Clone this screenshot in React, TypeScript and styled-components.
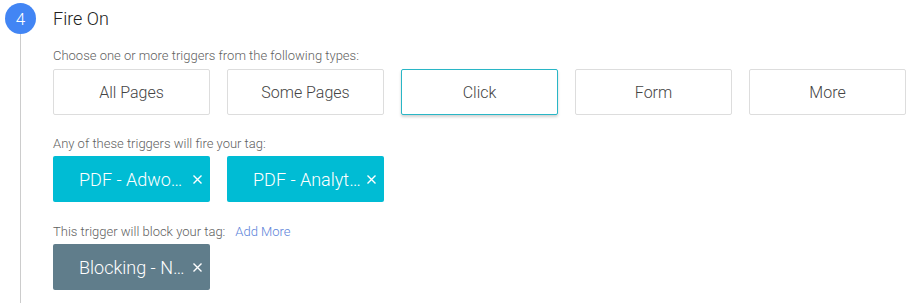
import React from "react";
import styled, { createGlobalStyle } from "styled-components";

const GlobalStyle = createGlobalStyle`
    html, body {
        margin: 0;
        padding: 0;
        background: #ffffff;
        font-family: Roboto, "Liberation Sans", Arial, sans-serif;
    }
`;

const TRIGGER_TYPES = ["All Pages", "Some Pages", "Click", "Form", "More"];

const CloseIcon = () => (
    <svg width="9" height="9" viewBox="0 0 9 9" fill="none" stroke="currentColor" strokeWidth="1.4">
        <path d="M0.5 0.5 L8.5 8.5 M8.5 0.5 L0.5 8.5" />
    </svg>
);

const App = () => {
    const [selected, setSelected] = React.useState("Click");

    return (
        <>
            <GlobalStyle />
            <Step>
                <Rail>
                    <StepNumber>4</StepNumber>
                    <RailLine />
                </Rail>
                <Content>
                    <Title>Fire On</Title>
                    <Label>Choose one or more triggers from the following types:</Label>
                    <TypeRow>
                        {TRIGGER_TYPES.map((type) => (
                            <TypeButton key={type} $active={type === selected} onClick={() => setSelected(type)}>
                                {type}
                            </TypeButton>
                        ))}
                    </TypeRow>

                    <Section>
                        <Label>Any of these triggers will fire your tag:</Label>
                        <ChipRow>
                            <Chip $tone="fire">
                                <ChipText>PDF - Adwords Conversion</ChipText>
                                <ChipClose>
                                    <CloseIcon />
                                </ChipClose>
                            </Chip>
                            <Chip $tone="fire">
                                <ChipText>PDF - Analytics Event</ChipText>
                                <ChipClose>
                                    <CloseIcon />
                                </ChipClose>
                            </Chip>
                        </ChipRow>
                    </Section>

                    <Section>
                        <Label>
                            This trigger will block your tag:
                            <AddMore href="#">Add More</AddMore>
                        </Label>
                        <ChipRow>
                            <Chip $tone="block">
                                <ChipText>Blocking - Non Production</ChipText>
                                <ChipClose>
                                    <CloseIcon />
                                </ChipClose>
                            </Chip>
                        </ChipRow>
                    </Section>
                </Content>
            </Step>
        </>
    );
};

export default App;

const Step = styled.div`
    display: flex;
    height: 303px;
    overflow: hidden;
`;

const Rail = styled.div`
    display: flex;
    flex-direction: column;
    align-items: center;
    width: 31px;
    margin-left: 5px;
    padding-top: 3px;
`;

const StepNumber = styled.div`
    width: 31px;
    height: 31px;
    border-radius: 50%;
    background: #4285f4;
    color: #ffffff;
    font-size: 17px;
    font-weight: 300;
    display: flex;
    align-items: center;
    justify-content: center;
    flex-shrink: 0;
`;

const RailLine = styled.div`
    width: 1px;
    flex: 1;
    background: #cccccc;
`;

const Content = styled.div`
    margin-left: 17px;
    padding-top: 3px;
`;

const Title = styled.div`
    font-size: 18px;
    line-height: 31px;
    color: #212121;
    font-weight: 300;
`;

const Label = styled.div`
    font-size: 13px;
    line-height: 16px;
    color: #5f5f5f;
    font-weight: 300;
    margin-top: 14px;
`;

const AddMore = styled.a`
    color: #5b83d9;
    text-decoration: none;
    margin-left: 10px;
`;

const TypeRow = styled.div`
    display: flex;
    gap: 17px;
    margin-top: 5px;
`;

const TypeButton = styled.button<{ $active: boolean }>`
    width: 157px;
    height: 46px;
    box-sizing: border-box;
    background: #ffffff;
    border: 1px solid ${(p) => (p.$active ? "#29b6c6" : "#dddddd")};
    border-radius: 2px;
    box-shadow: ${(p) => (p.$active ? "0 2px 3px rgba(0, 0, 0, 0.18)" : "none")};
    font-family: inherit;
    font-size: 16px;
    font-weight: 300;
    color: #444444;
    cursor: pointer;
    padding: 0;
`;

const Section = styled.div`
    margin-top: 21px;

    & + & {
        margin-top: 22px;
    }

    ${Label} {
        margin-top: 0;
    }
`;

const ChipRow = styled.div`
    display: flex;
    gap: 17px;
    margin-top: 4px;
`;

const Chip = styled.div<{ $tone: "fire" | "block" }>`
    display: flex;
    align-items: center;
    width: 157px;
    height: 46px;
    box-sizing: border-box;
    padding: 0 8px 0 26px;
    border-radius: 2px;
    background: ${(p) => (p.$tone === "fire" ? "#00bcd4" : "#607d8b")};
    color: #ffffff;
    font-size: 18px;
    font-weight: 300;
`;

const ChipText = styled.span`
    width: 108px;
    white-space: nowrap;
    overflow: hidden;
    text-overflow: ellipsis;
`;

const ChipClose = styled.span`
    display: flex;
    margin-left: auto;
    cursor: pointer;
`;
